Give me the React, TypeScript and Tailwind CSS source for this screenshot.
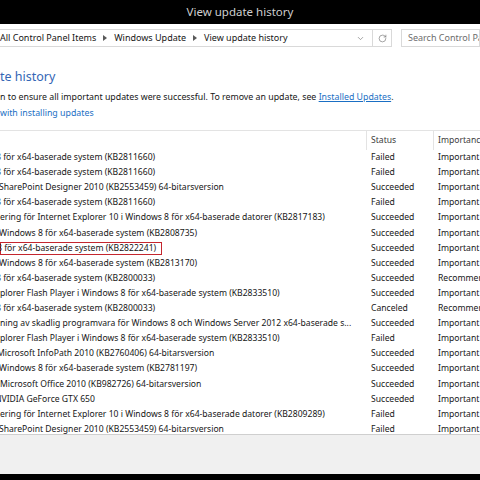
import React from 'react';
import { ChevronDown, RotateCw } from 'lucide-react';

type Update = {
  name: string;
  status: string;
  importance: string;
  shift?: number;
  marked?: boolean;
};

const updates: Update[] = [
  { name: '8 för x64-baserade system (KB2811660)', status: 'Failed', importance: 'Important', shift: 4 },
  { name: '8 för x64-baserade system (KB2811660)', status: 'Failed', importance: 'Important', shift: 4 },
  { name: 'SharePoint Designer 2010 (KB2553459) 64-bitarsversion', status: 'Succeeded', importance: 'Important', shift: 1 },
  { name: '8 för x64-baserade system (KB2811660)', status: 'Failed', importance: 'Important', shift: 4 },
  { name: 'ering för Internet Explorer 10 i Windows 8 för x64-baserade datorer (KB2817183)', status: 'Succeeded', importance: 'Important' },
  { name: 'Windows 8 för x64-baserade system (KB2808735)', status: 'Succeeded', importance: 'Important', shift: 1 },
  { name: '8 för x64-baserade system (KB2822241)', status: 'Succeeded', importance: 'Important', shift: 4, marked: true },
  { name: 'Windows 8 för x64-baserade system (KB2813170)', status: 'Succeeded', importance: 'Important', shift: 1 },
  { name: '8 för x64-baserade system (KB2800033)', status: 'Succeeded', importance: 'Recommended', shift: 4 },
  { name: 'plorer Flash Player i Windows 8 för x64-baserade system (KB2833510)', status: 'Succeeded', importance: 'Important' },
  { name: '8 för x64-baserade system (KB2800033)', status: 'Canceled', importance: 'Recommended', shift: 4 },
  { name: 'ning av skadlig programvara för Windows 8 och Windows Server 2012 x64-baserade s...', status: 'Succeeded', importance: 'Important' },
  { name: 'plorer Flash Player i Windows 8 för x64-baserade system (KB2833510)', status: 'Failed', importance: 'Important' },
  { name: 'Microsoft InfoPath 2010 (KB2760406) 64-bitarsversion', status: 'Succeeded', importance: 'Important', shift: 3 },
  { name: 'Windows 8 för x64-baserade system (KB2781197)', status: 'Succeeded', importance: 'Important', shift: 1 },
  { name: ' Microsoft Office 2010 (KB982726) 64-bitarsversion', status: 'Succeeded', importance: 'Important' },
  { name: 'NVIDIA GeForce GTX 650', status: 'Succeeded', importance: 'Important', shift: 5 },
  { name: 'ering för Internet Explorer 10 i Windows 8 för x64-baserade datorer (KB2809289)', status: 'Failed', importance: 'Important' },
  { name: 'SharePoint Designer 2010 (KB2553459) 64-bitarsversion', status: 'Failed', importance: 'Important', shift: 1 },
];

const Crumb = () => (
  <svg width="4" height="6" viewBox="0 0 4 6" className="mx-[7px] shrink-0">
    <path d="M0 0 L4 3 L0 6 Z" fill="#5a5a5a" />
  </svg>
);

export default function App() {
  return (
    <div
      className="w-[480px] h-[480px] overflow-hidden flex flex-col bg-white text-[#161616]"
      style={{ fontFamily: '"Noto Sans", "Open Sans", sans-serif' }}
    >
      {/* title bar */}
      <div className="h-[24px] shrink-0 bg-black flex items-center justify-center">
        <span className="text-[11.5px] text-[#cfcfcf] leading-none">View update history</span>
      </div>

      {/* address + search */}
      <div className="h-[26px] shrink-0 pt-[5px] flex">
        <div className="w-[394px] -ml-[2px] h-[18px] border border-[#d9d9d9] flex items-center shrink-0">
          <div className="flex-1 flex items-center text-[9px] whitespace-nowrap pl-[1px]">
            <span>All Control Panel Items</span>
            <Crumb />
            <span>Windows Update</span>
            <Crumb />
            <span>View update history</span>
          </div>
          <div className="w-[20px] flex items-center justify-center pr-[4px]">
            <ChevronDown size={9} strokeWidth={1.6} color="#6a6a6a" />
          </div>
          <div className="w-[19px] h-full border-l border-[#d9d9d9] flex items-center justify-center">
            <RotateCw size={9} strokeWidth={1.6} color="#6a6a6a" />
          </div>
        </div>
        <div className="ml-[9px] flex-1 h-[18px] border border-[#d9d9d9] flex items-center pl-[6px] whitespace-nowrap overflow-hidden">
          <span className="text-[9px] text-[#6d6d6d]">Search Control Panel</span>
        </div>
      </div>

      {/* content */}
      <div className="flex-1 min-h-0 flex flex-col overflow-hidden">
        <div className="mt-[19px] h-[16px] leading-[16px] text-[12.5px] text-[#3366b5] whitespace-nowrap">te history</div>
        <div className="mt-[5px] h-[14px] leading-[14px] text-[8.8px] whitespace-nowrap">
          n to ensure all important updates were successful. To remove an update, see{' '}
          <span className="text-[#1a6fc4] underline">Installed Updates</span>.
        </div>
        <div className="mt-[2px] h-[14px] leading-[14px] text-[8.8px] text-[#1a6fc4] whitespace-nowrap">with installing updates</div>

        <div className="mt-[10px] flex-1 min-h-0 overflow-hidden">
          <div className="h-[20px] border-t border-[#e3e3e3] flex text-[8.6px] text-[#3c3c3c]">
            <div className="w-[366px] shrink-0" />
            <div className="w-[67px] shrink-0 border-l border-[#e3e3e3] pl-[4px] flex items-center">Status</div>
            <div className="flex-1 min-w-0 border-l border-[#e3e3e3] pl-[4px] flex items-center whitespace-nowrap overflow-hidden">Importance</div>
          </div>
          {updates.map((u, i) => (
            <div key={i} className="h-[15.1px] flex items-center text-[8.6px] whitespace-nowrap">
              <div className="w-[366px] shrink-0 overflow-hidden">
                {u.marked ? (
                  <span className="inline-flex items-center h-[13px] border border-[#c4262e] pr-[5px]">
                    <span style={{ marginLeft: -(u.shift ?? 0) }}>{u.name}</span>
                  </span>
                ) : (
                  <span className="block" style={{ marginLeft: -(u.shift ?? 0) }}>{u.name}</span>
                )}
              </div>
              <div className="w-[67px] shrink-0 pl-[5px]">{u.status}</div>
              <div className="flex-1 min-w-0 pl-[5px] overflow-hidden">{u.importance}</div>
            </div>
          ))}
        </div>
      </div>

      {/* bottom */}
      <div className="h-[40px] shrink-0 border-t border-[#cfcfcf] bg-[#f0f0f0]" />
      <div className="h-[6px] shrink-0 bg-black" />
    </div>
  );
}
